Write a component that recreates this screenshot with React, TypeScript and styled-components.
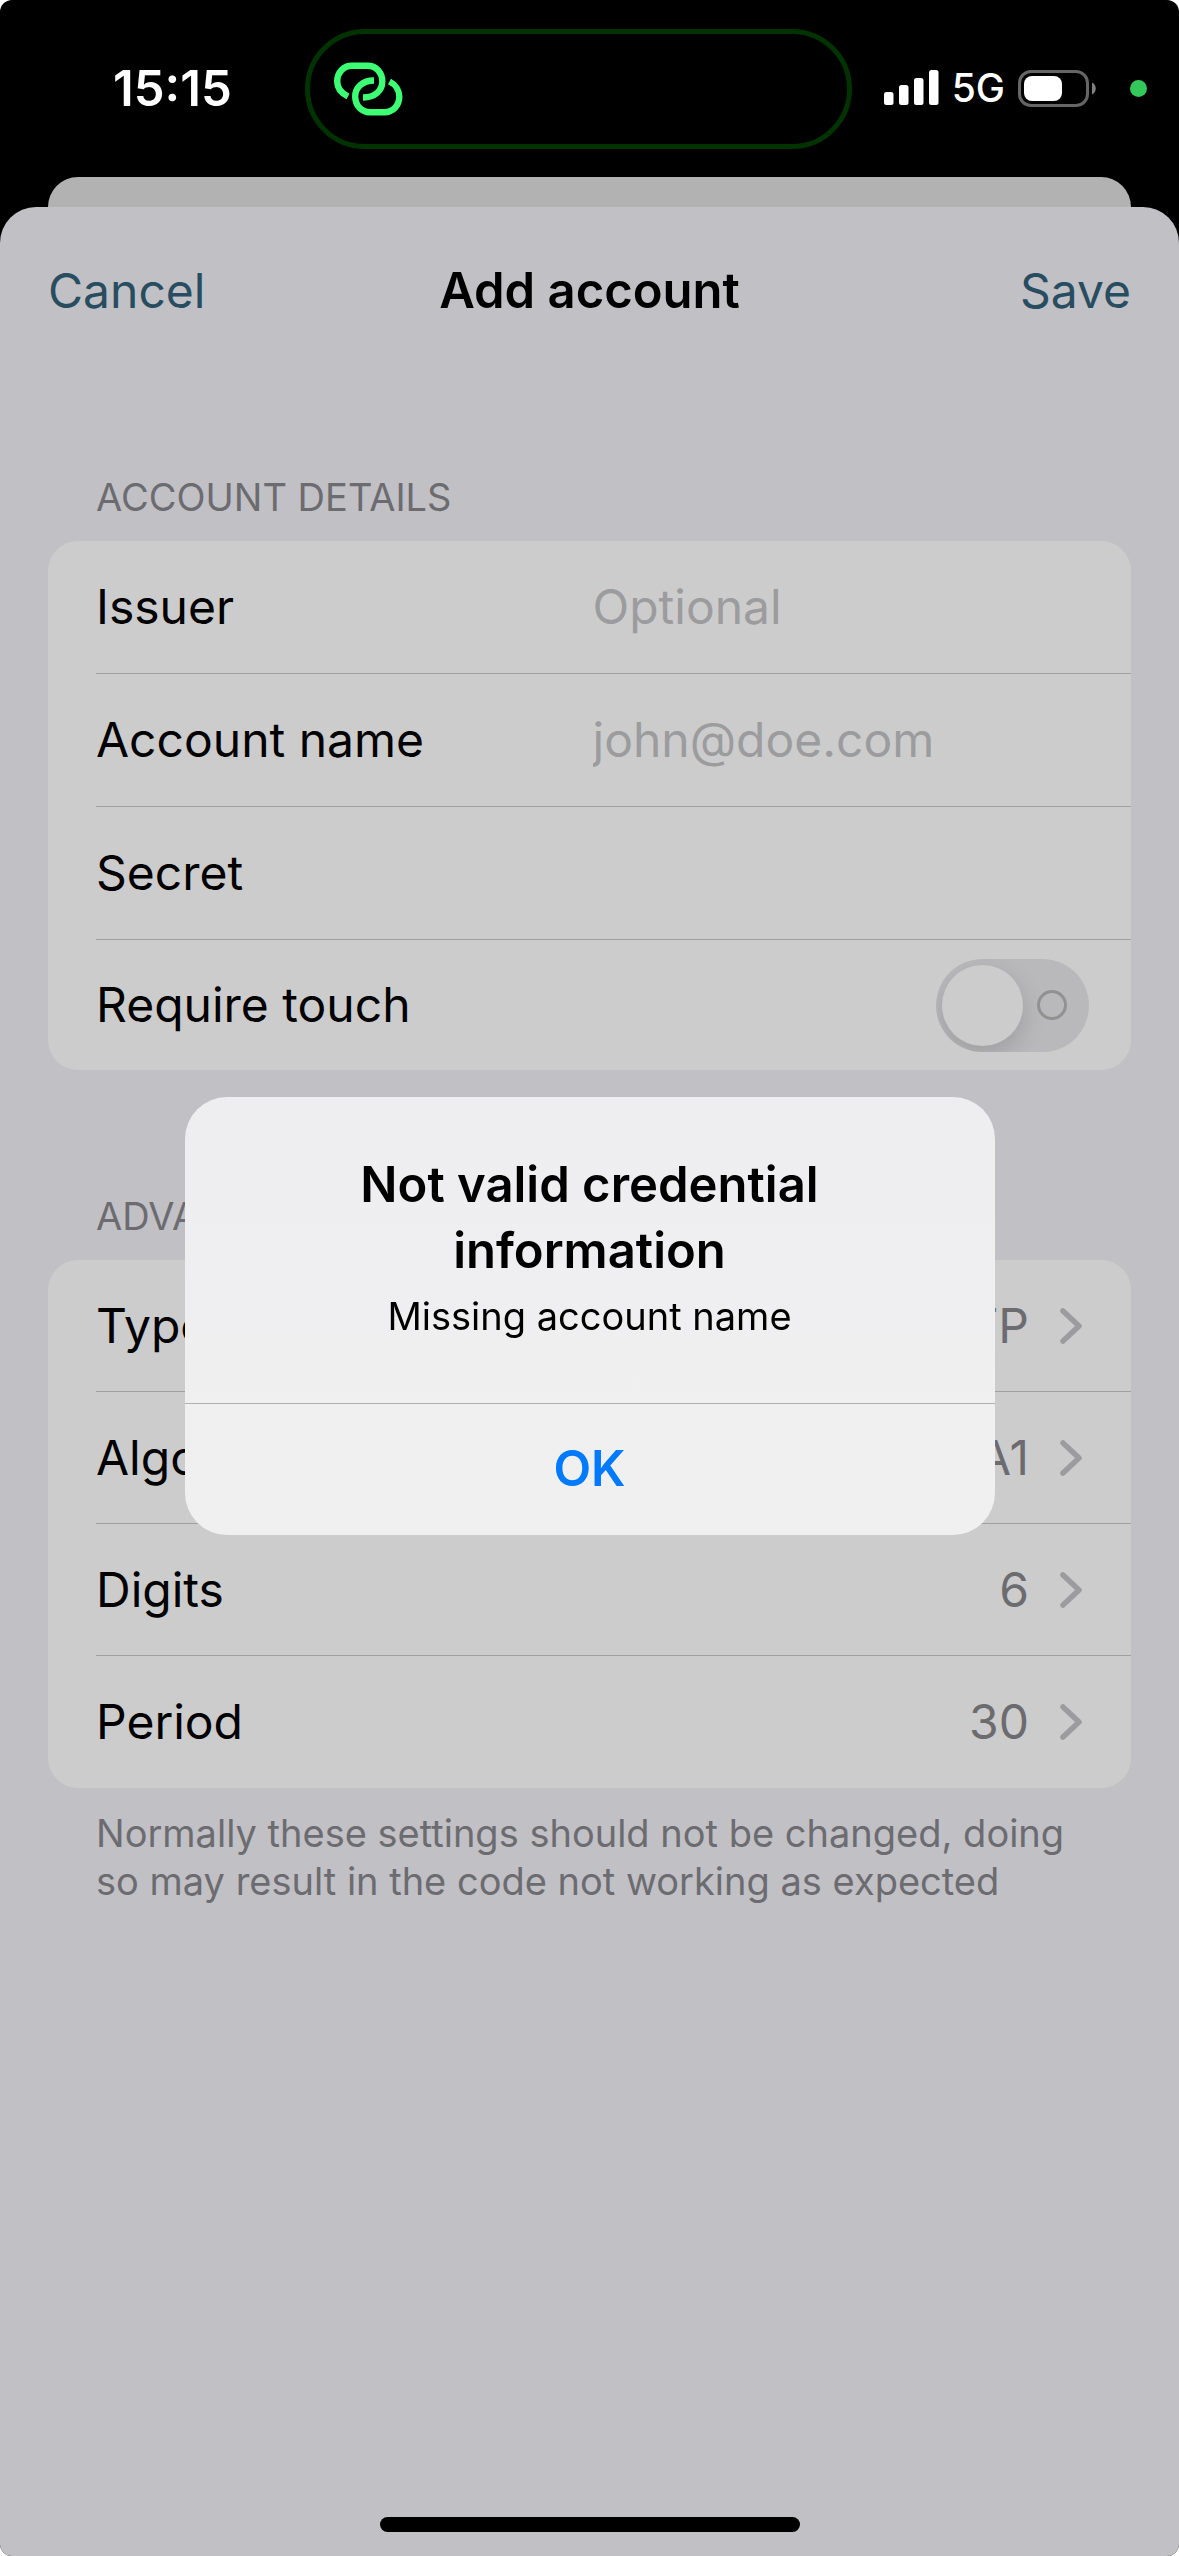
import React, { useState } from "react";
import styled, { createGlobalStyle } from "styled-components";

const GlobalStyle = createGlobalStyle`
  *, *::before, *::after { box-sizing: border-box; }
  body {
    margin: 0;
    background: #fff;
    color: #000;
    font-family: Inter, "Liberation Sans", sans-serif;
    font-size: 48px;
    line-height: 66px;
  }
  button, input { font: inherit; color: inherit; }
  button {
    margin: 0;
    padding: 0;
    border: 0;
    background: none;
    cursor: pointer;
  }
`;

const Screen = styled.div`
  display: flex;
  flex-direction: column;
  min-height: 100vh;
  border-radius: 12px;
  overflow: hidden;
  background: #000;
`;

const StatusBar = styled.header`
  display: grid;
  grid-template-columns: minmax(0, 1fr) 547px minmax(0, 1fr);
  align-items: start;
  height: 177px;
  padding: 29px 32px 0 10px;
  color: #fff;
`;

const Time = styled.time`
  padding-left: 103px;
  font-size: 49px;
  font-weight: 600;
  line-height: 119px;
`;

const Island = styled.div`
  display: flex;
  align-items: center;
  height: 120px;
  padding-left: 23px;
  border: 5px solid #003300;
  border-radius: 60px;
`;

const StatusIcons = styled.div`
  display: flex;
  align-items: center;
  justify-content: flex-end;
  height: 118px;
`;

const Network = styled.span`
  margin: 0 13px 0 12px;
  font-size: 39px;
  font-weight: 500;
`;

const ActivityDot = styled.span`
  width: 17px;
  height: 17px;
  margin-left: 33px;
  border-radius: 50%;
  background: #34c759;
`;

const BackCard = styled.div`
  height: 30px;
  margin: 0 48px;
  border-radius: 30px 30px 0 0;
  background: #b2b2b2;
`;

const Sheet = styled.main`
  display: flex;
  flex: 1;
  flex-direction: column;
  padding: 0 48px 24px;
  border-radius: 36px 36px 0 0;
  background: #c1c0c5;
`;

const NavBar = styled.nav`
  display: grid;
  grid-template-columns: 1fr auto 1fr;
  align-items: center;
  height: 168px;
`;

const NavButton = styled.button<{ $end?: boolean }>`
  justify-self: ${({ $end }) => ($end ? "end" : "start")};
  color: #284c60;
`;

const NavTitle = styled.h1`
  margin: 0;
  font-size: 49px;
  font-weight: 600;
`;

const Group = styled.section<{ $first?: boolean }>`
  padding-top: ${({ $first }) => ($first ? 96 : 120)}px;
`;

const GroupTitle = styled.h2`
  margin: 0 48px;
  padding-bottom: 18px;
  color: #6c6c70;
  font-size: 38px;
  font-weight: 400;
  line-height: 52px;
  text-transform: uppercase;
`;

const Card = styled.div`
  padding-left: 48px;
  border-radius: 30px;
  background: #cccccc;
`;

const rowBase = `
  display: flex;
  align-items: center;
  width: 100%;
  text-align: left;
  &:not(:last-child) { border-bottom: 1px solid #a0a0a2; }
`;

const FieldRow = styled.div`
  ${rowBase}
  height: 133px;
  padding-right: 42px;
  &:last-child { height: 130px; }
`;

const PickerRow = styled.button`
  ${rowBase}
  height: 132px;
  padding-right: 48px;
`;

const Label = styled.label`
  flex: 1;
`;

const TextField = styled.input`
  flex: 1;
  min-width: 0;
  padding: 0;
  border: 0;
  outline: 0;
  background: none;
  &::placeholder { color: #9c9c9e; opacity: 1; }
`;

const PickerLabel = styled.span`
  flex: 1;
`;

const PickerValue = styled.span`
  margin-right: 30px;
  color: #6c6c70;
`;

const Switch = styled.input`
  display: flex;
  flex: none;
  align-items: center;
  justify-content: space-between;
  width: 153px;
  height: 93px;
  margin: 0;
  padding: 0 22px 0 6px;
  appearance: none;
  overflow: hidden;
  border-radius: 47px;
  background: #b9b9bb;
  cursor: pointer;
  &::before {
    content: "";
    width: 81px;
    height: 81px;
    border-radius: 50%;
    background: #cccccc;
    box-shadow: 0 9px 24px rgba(0, 0, 0, 0.15);
  }
  &::after {
    content: "";
    width: 30px;
    height: 30px;
    border: 3px solid #919191;
    border-radius: 50%;
  }
  &:checked {
    flex-direction: row-reverse;
    padding: 0 6px 0 22px;
    background: #2a9f47;
  }
`;

const Footnote = styled.p`
  margin: 21px 48px 0;
  color: #6c6c70;
  font-size: 38px;
  line-height: 48px;
`;

const HomeIndicator = styled.div`
  align-self: center;
  width: 420px;
  height: 15px;
  margin-top: auto;
  border-radius: 8px;
  background: #000;
`;

const Overlay = styled.div`
  position: fixed;
  inset: 0;
  display: flex;
  align-items: center;
  justify-content: center;
  padding: 177px 0 102px;
`;

const Dialog = styled.div`
  width: 810px;
  max-width: 90%;
  overflow: hidden;
  border-radius: 42px;
  background: linear-gradient(#eeeef1, #f0f0f0);
  text-align: center;
`;

const DialogBody = styled.div`
  padding: 55px 48px 61px;
`;

const DialogTitle = styled.h2`
  max-width: 600px;
  margin: 0 auto 6px;
  font-size: 49px;
  font-weight: 600;
`;

const DialogText = styled.p`
  margin: 0;
  font-size: 38px;
  line-height: 52px;
`;

const DialogButton = styled.button`
  width: 100%;
  height: 132px;
  border-top: 1px solid #b0b0b2;
  color: #007aff;
  font-size: 49px;
  font-weight: 600;
`;

const LinkIcon = () => (
  <svg width="70" height="56" viewBox="0 0 70 56" fill="none" stroke="#3cff74" strokeWidth="6.4" aria-hidden="true">
    <path d="M15 35.5C8 32 4.2 26.5 4.2 20.5C4.2 11.5 10.5 4.8 19 4.8H34.5C43 4.8 49.3 11.5 49.3 20.5C49.3 29.5 42 36.5 30 36.5" />
    <path d="M41 19.5C29.5 19.5 22.2 26.5 22.2 35.5C22.2 44.5 28.5 51.2 37 51.2H51.5C60 51.2 66.3 44.5 66.3 35.5C66.3 29.5 62.5 23.5 56.5 20.5" />
  </svg>
);

const SignalIcon = () => (
  <svg width="56" height="36" viewBox="0 0 56 36" fill="#fff" aria-hidden="true">
    <rect x="0" y="22" width="9.5" height="13" rx="2.5" />
    <rect x="15" y="15" width="9.5" height="20" rx="2.5" />
    <rect x="30" y="8" width="9.5" height="27" rx="2.5" />
    <rect x="45" y="0" width="9.5" height="35" rx="2.5" />
  </svg>
);

const BatteryIcon = () => (
  <svg width="79" height="37" viewBox="0 0 79 37" fill="none" aria-hidden="true">
    <rect x="1.5" y="1.5" width="68" height="34" rx="11.5" stroke="#666" strokeWidth="3" />
    <rect x="6" y="6" width="38" height="25" rx="8" fill="#fff" />
    <path d="M74 12.5C79 14.5 79 22.5 74 24.5Z" fill="#808080" />
  </svg>
);

const Chevron = () => (
  <svg width="24" height="38" viewBox="0 0 24 38" fill="none" aria-hidden="true">
    <path d="M4 4L20 19L4 34" stroke="#9c9c9e" strokeWidth="5.5" strokeLinecap="round" strokeLinejoin="round" />
  </svg>
);

const fields = [
  { id: "issuer", label: "Issuer", placeholder: "Optional" },
  { id: "account", label: "Account name", placeholder: "john@doe.com" },
  { id: "secret", label: "Secret", placeholder: "" },
];

const settings = [
  { label: "Type", value: "TOTP" },
  { label: "Algorithm", value: "SHA1" },
  { label: "Digits", value: "6" },
  { label: "Period", value: "30" },
];

export default function App() {
  const [alertOpen, setAlertOpen] = useState(true);

  return (
    <>
      <GlobalStyle />
      <Screen>
        <StatusBar>
          <Time>15:15</Time>
          <Island>
            <LinkIcon />
          </Island>
          <StatusIcons>
            <SignalIcon />
            <Network>5G</Network>
            <BatteryIcon />
            <ActivityDot />
          </StatusIcons>
        </StatusBar>
        <BackCard />
        <Sheet>
          <NavBar>
            <NavButton type="button">Cancel</NavButton>
            <NavTitle>Add account</NavTitle>
            <NavButton type="button" $end onClick={() => setAlertOpen(true)}>
              Save
            </NavButton>
          </NavBar>

          <Group $first>
            <GroupTitle>Account details</GroupTitle>
            <Card>
              {fields.map((field) => (
                <FieldRow key={field.id}>
                  <Label htmlFor={field.id}>{field.label}</Label>
                  <TextField id={field.id} type="text" placeholder={field.placeholder} />
                </FieldRow>
              ))}
              <FieldRow>
                <Label htmlFor="touch">Require touch</Label>
                <Switch id="touch" type="checkbox" role="switch" />
              </FieldRow>
            </Card>
          </Group>

          <Group>
            <GroupTitle>Advanced</GroupTitle>
            <Card>
              {settings.map((setting) => (
                <PickerRow key={setting.label} type="button">
                  <PickerLabel>{setting.label}</PickerLabel>
                  <PickerValue>{setting.value}</PickerValue>
                  <Chevron />
                </PickerRow>
              ))}
            </Card>
            <Footnote>
              Normally these settings should not be changed, doing so may result in the code not
              working as expected
            </Footnote>
          </Group>

          <HomeIndicator />
        </Sheet>
      </Screen>

      {alertOpen && (
        <Overlay>
          <Dialog role="alertdialog" aria-modal="true" aria-labelledby="alert-title" aria-describedby="alert-text">
            <DialogBody>
              <DialogTitle id="alert-title">Not valid credential information</DialogTitle>
              <DialogText id="alert-text">Missing account name</DialogText>
            </DialogBody>
            <DialogButton type="button" onClick={() => setAlertOpen(false)}>
              OK
            </DialogButton>
          </Dialog>
        </Overlay>
      )}
    </>
  );
}
